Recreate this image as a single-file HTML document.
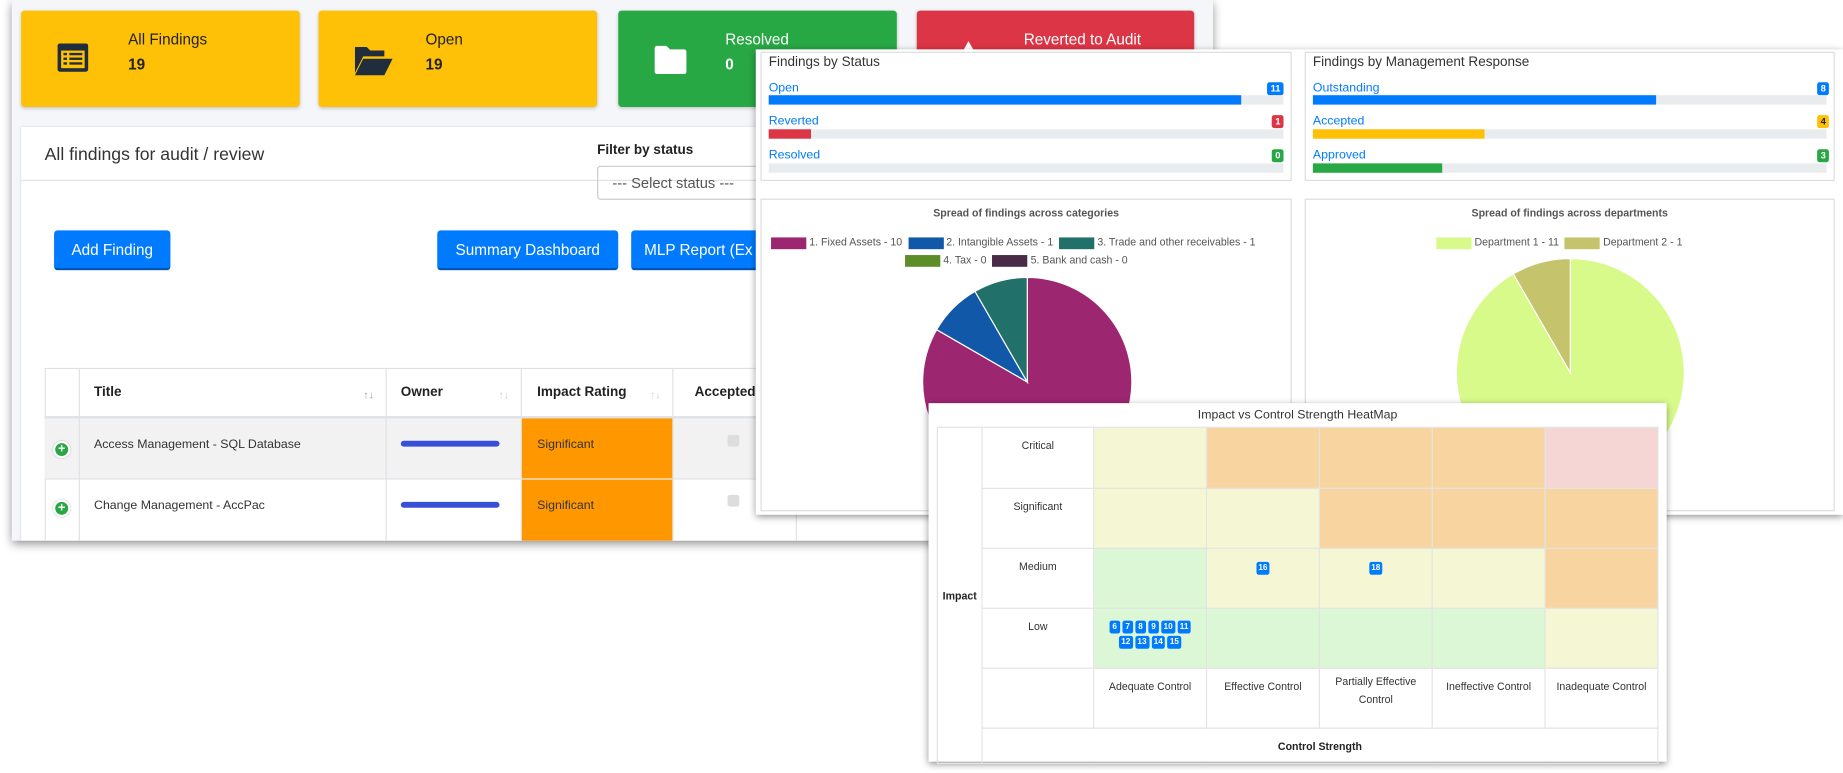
<!DOCTYPE html>
<html><head><meta charset="utf-8"><style>
*{box-sizing:border-box;margin:0;padding:0}
html,body{width:1843px;height:773px;overflow:hidden;background:#fff;font-family:"Liberation Sans",sans-serif}
#st{position:absolute;left:0;top:0;width:1568px;height:658px;transform:scale(1.17538);transform-origin:0 0}
.a{position:absolute}
.card{position:absolute;border-radius:3px;box-shadow:0 1px 3px rgba(0,0,0,.2)}
.ct{position:absolute;left:91px;top:17px;font-size:13px;color:#222}
.cn{position:absolute;left:91px;top:38px;font-size:13px;font-weight:bold;color:#222}
.btn{position:absolute;background:#007bff;color:#fff;font-size:13px;border-radius:3px;border-bottom:2px solid #0056b3;padding-top:9px;text-align:center}
.lk{color:#007bff;font-size:10.5px;position:absolute}
.bar{position:absolute;height:8px;background:#e9ecef}
.bd{position:absolute;font-size:8px;font-weight:bold;color:#fff;border-radius:2px;padding:1px 3px;line-height:9px}
.pan{position:absolute;background:#fff;border:1px solid #ddd}
td{border:1px solid #e3e3e3;font-size:9px;color:#333;text-align:center;vertical-align:top;padding-top:10px}
.Y{background:#f5f7d4}.O{background:#f8d5a0}.P{background:#f6d6d5}.G{background:#dbf7d5}
.b{display:inline-block;background:#007bff;color:#fff;font-size:7px;font-weight:bold;border-radius:2px;padding:1px 2px;margin:1px;line-height:9px;min-width:9px}
</style></head><body><div id="st">
<!-- layer 1 -->
<div class="a" style="left:10px;top:0;width:1022px;height:460px;background:#f4f6f9;box-shadow:0 3px 8px rgba(0,0,0,.45)"></div>
<div class="card" style="left:18px;top:9px;width:237px;height:82px;background:#ffc107">
<svg class="a" style="left:30px;top:26px" width="28" height="28" viewBox="0 0 28 28"><rect x="1" y="2" width="26" height="24" rx="2" fill="#1f2d3d"/><rect x="4" y="8" width="20" height="15" fill="#ffc107"/><g fill="#1f2d3d"><rect x="6" y="10" width="3" height="2"/><rect x="11" y="10" width="11" height="2"/><rect x="6" y="14" width="3" height="2"/><rect x="11" y="14" width="11" height="2"/><rect x="6" y="18" width="3" height="2"/><rect x="11" y="18" width="11" height="2"/></g></svg>
<div class="ct">All Findings</div><div class="cn">19</div></div>
<div class="card" style="left:271px;top:9px;width:237px;height:82px;background:#ffc107">
<svg class="a" style="left:30px;top:29px" width="34" height="28" viewBox="0 0 34 28"><path d="M1 2h10l3 3h12v5H8L1 24z" fill="#1f2d3d"/><path d="M8 12h25l-7 14H1z" fill="#1f2d3d"/></svg>
<div class="ct">Open</div><div class="cn">19</div></div>
<div class="card" style="left:526px;top:9px;width:237px;height:82px;background:#28a745">
<svg class="a" style="left:30px;top:29px" width="30" height="26" viewBox="0 0 30 26"><path d="M1 3a2 2 0 0 1 2-2h8l3 3h12a2 2 0 0 1 2 2v17a2 2 0 0 1-2 2H3a2 2 0 0 1-2-2z" fill="#fff"/></svg>
<div class="ct" style="color:#fff">Resolved</div><div class="cn" style="color:#fff">0</div></div>
<div class="card" style="left:780px;top:9px;width:236px;height:82px;background:#dc3545">
<div class="ct" style="color:#fff">Reverted to Audit</div>
<svg class="a" style="left:36px;top:26px" width="16" height="14"><path d="M8 0L16 14H0z" fill="#fff"/></svg></div>
<div class="a" style="left:18px;top:108px;width:1010px;height:352px;background:#fff;box-shadow:0 0 2px rgba(0,0,0,.15)"></div>
<div class="a" style="left:38px;top:123px;font-size:15px;color:#333">All findings for audit / review</div>
<div class="a" style="left:18px;top:153px;width:1010px;height:1px;background:#e2e2e2"></div>
<div class="a" style="left:508px;top:122px;font-size:11.5px;font-weight:bold;color:#222">Filter by status</div>
<div class="a" style="left:508px;top:141px;width:140px;height:29px;border:1px solid #ccc;border-radius:3px;font-size:12.5px;color:#555;padding:7px 0 0 12px">--- Select status ---</div>
<div class="btn" style="left:46px;top:196px;width:99px;height:34px">Add Finding</div>
<div class="btn" style="left:372px;top:196px;width:154px;height:34px">Summary Dashboard</div>
<div class="btn" style="left:537px;top:196px;width:120px;height:34px;text-align:left;padding-left:11px">MLP Report (Ex</div>
<div class="a" style="left:38px;top:313px;width:640px;height:147px;border:1px solid #dee2e6;border-bottom:none"></div>
<div class="a" style="left:38px;top:355px;width:640px;height:52px;background:#f2f2f2"></div>
<div class="a" style="left:38px;top:354px;width:640px;height:2px;background:#dee2e6"></div>
<div class="a" style="left:38px;top:407px;width:640px;height:1px;background:#dee2e6"></div>
<div class="a" style="left:67px;top:313px;width:1px;height:147px;background:#dee2e6"></div>
<div class="a" style="left:328px;top:313px;width:1px;height:147px;background:#dee2e6"></div>
<div class="a" style="left:443px;top:313px;width:1px;height:147px;background:#dee2e6"></div>
<div class="a" style="left:572px;top:313px;width:1px;height:147px;background:#dee2e6"></div>
<div class="a" style="left:444px;top:356px;width:128px;height:104px;background:#ff9800"></div>
<div class="a" style="left:444px;top:407px;width:128px;height:1px;background:#f2f2f2"></div>
<div class="a" style="left:80px;top:328px;font-size:11.5px;font-weight:bold;color:#222">Title</div>
<div class="a" style="left:341px;top:328px;font-size:11.5px;font-weight:bold;color:#222">Owner</div>
<div class="a" style="left:457px;top:328px;font-size:11.5px;font-weight:bold;color:#222">Impact Rating</div>
<div class="a" style="left:591px;top:328px;font-size:11.5px;font-weight:bold;color:#222">Accepted</div>
<div class="a" style="left:309px;top:331px;font-size:9px;color:#999">↑↓</div>
<div class="a" style="left:424px;top:331px;font-size:9px;color:#ccc">↑↓</div>
<div class="a" style="left:553px;top:331px;font-size:9px;color:#ccc">↑↓</div>
<div class="a" style="left:80px;top:372px;font-size:10.5px;color:#333">Access Management - SQL Database</div>
<div class="a" style="left:80px;top:424px;font-size:10.5px;color:#333">Change Management - AccPac</div>
<div class="a" style="left:341px;top:375px;width:84px;height:5px;background:#3a4fd8;border-radius:3px"></div>
<div class="a" style="left:341px;top:427px;width:84px;height:5px;background:#3a4fd8;border-radius:3px"></div>
<div class="a" style="left:457px;top:372px;font-size:10.5px;color:#333">Significant</div>
<div class="a" style="left:457px;top:424px;font-size:10.5px;color:#333">Significant</div>
<div class="a" style="left:619px;top:370px;width:10px;height:10px;background:#ddd;border-radius:2px"></div>
<div class="a" style="left:619px;top:421px;width:10px;height:10px;background:#ddd;border-radius:2px"></div>
<div class="a" style="left:45px;top:375px;width:15px;height:15px;border-radius:50%;background:#28a745;border:2px solid #fff;box-shadow:0 0 1px #888;color:#fff;font-size:11px;font-weight:bold;text-align:center;line-height:11px">+</div>
<div class="a" style="left:45px;top:425px;width:15px;height:15px;border-radius:50%;background:#28a745;border:2px solid #fff;box-shadow:0 0 1px #888;color:#fff;font-size:11px;font-weight:bold;text-align:center;line-height:11px">+</div>

<!-- layer 2 -->
<div class="a" style="left:643px;top:42px;width:925px;height:396px;background:#fff;box-shadow:0 2px 6px rgba(0,0,0,.45)"></div>
<div class="pan" style="left:647px;top:44px;width:452px;height:110px"></div>
<div class="pan" style="left:1110px;top:44px;width:451px;height:110px"></div>
<div class="a" style="left:654px;top:47px;font-size:11.5px;color:#333">Findings by Status</div>
<div class="a" style="left:1117px;top:47px;font-size:11.5px;color:#333">Findings by Management Response</div>
<div class="lk" style="left:654px;top:69px">Open</div><div class="bd" style="left:1078px;top:70px;background:#007bff">11</div>
<div class="bar" style="left:654px;top:81px;width:438px"></div><div class="bar" style="left:654px;top:81px;width:402px;background:#007bff"></div>
<div class="lk" style="left:654px;top:97px;color:#007bff">Reverted</div><div class="bd" style="left:1082px;top:98px;background:#dc3545">1</div>
<div class="bar" style="left:654px;top:110px;width:438px"></div><div class="bar" style="left:654px;top:110px;width:36px;background:#dc3545"></div>
<div class="lk" style="left:654px;top:126px">Resolved</div><div class="bd" style="left:1082px;top:127px;background:#28a745">0</div>
<div class="bar" style="left:654px;top:139px;width:438px"></div>
<div class="lk" style="left:1117px;top:69px">Outstanding</div><div class="bd" style="left:1546px;top:70px;background:#007bff">8</div>
<div class="bar" style="left:1117px;top:81px;width:437px"></div><div class="bar" style="left:1117px;top:81px;width:292px;background:#007bff"></div>
<div class="lk" style="left:1117px;top:97px">Accepted</div><div class="bd" style="left:1546px;top:98px;background:#ffc107;color:#222">4</div>
<div class="bar" style="left:1117px;top:110px;width:437px"></div><div class="bar" style="left:1117px;top:110px;width:146px;background:#ffc107"></div>
<div class="lk" style="left:1117px;top:126px">Approved</div><div class="bd" style="left:1546px;top:127px;background:#28a745">3</div>
<div class="bar" style="left:1117px;top:139px;width:437px"></div><div class="bar" style="left:1117px;top:139px;width:110px;background:#28a745"></div>
<div class="pan" style="left:647px;top:169px;width:452px;height:266px"></div>
<div class="pan" style="left:1110px;top:169px;width:451px;height:266px"></div>
<div class="a" style="left:647px;top:176px;width:452px;text-align:center;font-size:9px;font-weight:bold;color:#555">Spread of findings across categories</div>
<div class="a" style="left:1110px;top:176px;width:451px;text-align:center;font-size:9px;font-weight:bold;color:#555">Spread of findings across departments</div>
<div class="a" style="left:656px;top:201px;font-size:9px;color:#555;white-space:nowrap">
<span style="display:inline-block;width:30px;height:10px;background:#9c2670;vertical-align:middle"></span> 1. Fixed Assets - 10 &nbsp;<span style="display:inline-block;width:30px;height:10px;background:#1158a8;vertical-align:middle"></span> 2. Intangible Assets - 1 &nbsp;<span style="display:inline-block;width:30px;height:10px;background:#21706a;vertical-align:middle"></span> 3. Trade and other receivables - 1</div>
<div class="a" style="left:770px;top:216px;font-size:9px;color:#555;white-space:nowrap">
<span style="display:inline-block;width:30px;height:10px;background:#5d8c2a;vertical-align:middle"></span> 4. Tax - 0 &nbsp;<span style="display:inline-block;width:30px;height:10px;background:#4a2b47;vertical-align:middle"></span> 5. Bank and cash - 0</div>
<div class="a" style="left:1222px;top:201px;font-size:9px;color:#555;white-space:nowrap">
<span style="display:inline-block;width:30px;height:10px;background:#d7fa8b;vertical-align:middle"></span> Department 1 - 11 &nbsp;<span style="display:inline-block;width:30px;height:10px;background:#c5c46d;vertical-align:middle"></span> Department 2 - 1</div>
<svg class="a" style="left:0;top:0" width="1568" height="440">
<path d="M874 325L874 236A89 89 0 1 1 796.9 280.5Z" fill="#9c2670" stroke="#fff"/>
<path d="M874 325L796.9 280.5A89 89 0 0 1 829.5 247.9Z" fill="#1158a8" stroke="#fff"/>
<path d="M874 325L829.5 247.9A89 89 0 0 1 874 236Z" fill="#21706a" stroke="#fff"/>
<path d="M1336 317L1336 220A97 97 0 1 1 1287.5 233Z" fill="#d7fa8b" stroke="#fff"/>
<path d="M1336 317L1287.5 233A97 97 0 0 1 1336 220Z" fill="#c5c46d" stroke="#fff"/>
</svg>

<!-- layer 3 -->
<div class="a" style="left:790px;top:343px;width:628px;height:305px;background:#fff;box-shadow:0 2px 6px rgba(0,0,0,.45)">
<div style="text-align:center;font-size:10.5px;color:#333;padding-top:4px">Impact vs Control Strength HeatMap</div>
<table style="position:absolute;left:7px;top:20px;width:614px;border-collapse:collapse;table-layout:fixed">
<colgroup><col style="width:38px"><col style="width:95px"><col><col><col><col><col></colgroup>
<tr style="height:52px"><td rowspan="6" style="vertical-align:top;font-weight:bold;font-size:9px;color:#222;padding-top:138px">Impact</td><td>Critical</td><td class="Y"></td><td class="O"></td><td class="O"></td><td class="O"></td><td class="P"></td></tr>
<tr style="height:51px"><td>Significant</td><td class="Y"></td><td class="Y"></td><td class="O"></td><td class="O"></td><td class="O"></td></tr>
<tr style="height:51px"><td>Medium</td><td class="G"></td><td class="Y"><span class="b">16</span></td><td class="Y"><span class="b">18</span></td><td class="Y"></td><td class="O"></td></tr>
<tr style="height:51px"><td>Low</td><td class="G" style="padding-top:9px;line-height:10px"><span class="b">6</span><span class="b">7</span><span class="b">8</span><span class="b">9</span><span class="b">10</span><span class="b">11</span><br><span class="b">12</span><span class="b">13</span><span class="b">14</span><span class="b">15</span></td><td class="G"></td><td class="G"></td><td class="G"></td><td class="Y"></td></tr>
<tr style="height:51px"><td></td><td>Adequate Control</td><td>Effective Control</td><td style="line-height:15px;padding-top:4px">Partially Effective Control</td><td>Ineffective Control</td><td>Inadequate Control</td></tr>
<tr style="height:30px"><td colspan="6" style="font-weight:bold;color:#222">Control Strength</td></tr>
</table></div>
</div></body></html>
